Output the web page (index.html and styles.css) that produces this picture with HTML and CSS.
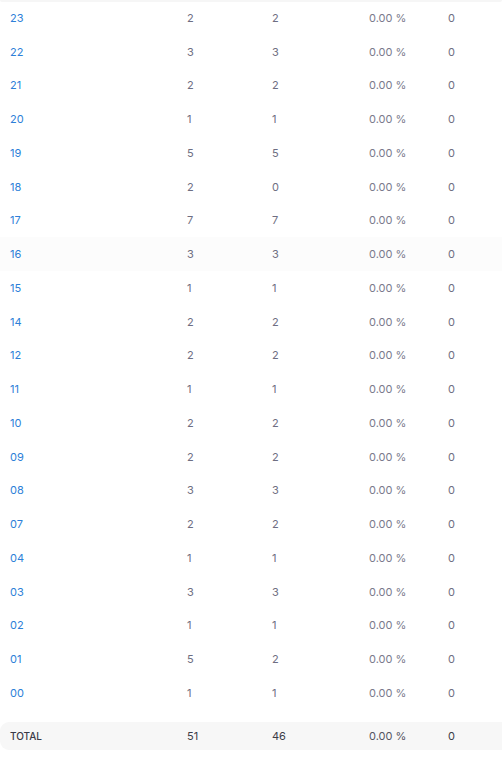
FILE: index.html
```html
<!DOCTYPE html>
<html>
<head>
<meta charset="utf-8">
<link rel="stylesheet" href="styles.css">
</head>
<body>
<div class="top-strip"></div>
<div class="table">
  <div class="row"><a class="c1">23</a><span class="c2">2</span><span class="c3">2</span><span class="c4">0.00 %</span><span class="c5">0</span></div>
  <div class="row"><a class="c1">22</a><span class="c2">3</span><span class="c3">3</span><span class="c4">0.00 %</span><span class="c5">0</span></div>
  <div class="row"><a class="c1">21</a><span class="c2">2</span><span class="c3">2</span><span class="c4">0.00 %</span><span class="c5">0</span></div>
  <div class="row"><a class="c1">20</a><span class="c2">1</span><span class="c3">1</span><span class="c4">0.00 %</span><span class="c5">0</span></div>
  <div class="row"><a class="c1">19</a><span class="c2">5</span><span class="c3">5</span><span class="c4">0.00 %</span><span class="c5">0</span></div>
  <div class="row"><a class="c1">18</a><span class="c2">2</span><span class="c3">0</span><span class="c4">0.00 %</span><span class="c5">0</span></div>
  <div class="row"><a class="c1">17</a><span class="c2">7</span><span class="c3">7</span><span class="c4">0.00 %</span><span class="c5">0</span></div>
  <div class="row hover"><a class="c1">16</a><span class="c2">3</span><span class="c3">3</span><span class="c4">0.00 %</span><span class="c5">0</span></div>
  <div class="row"><a class="c1">15</a><span class="c2">1</span><span class="c3">1</span><span class="c4">0.00 %</span><span class="c5">0</span></div>
  <div class="row"><a class="c1">14</a><span class="c2">2</span><span class="c3">2</span><span class="c4">0.00 %</span><span class="c5">0</span></div>
  <div class="row"><a class="c1">12</a><span class="c2">2</span><span class="c3">2</span><span class="c4">0.00 %</span><span class="c5">0</span></div>
  <div class="row"><a class="c1">11</a><span class="c2">1</span><span class="c3">1</span><span class="c4">0.00 %</span><span class="c5">0</span></div>
  <div class="row"><a class="c1">10</a><span class="c2">2</span><span class="c3">2</span><span class="c4">0.00 %</span><span class="c5">0</span></div>
  <div class="row"><a class="c1">09</a><span class="c2">2</span><span class="c3">2</span><span class="c4">0.00 %</span><span class="c5">0</span></div>
  <div class="row"><a class="c1">08</a><span class="c2">3</span><span class="c3">3</span><span class="c4">0.00 %</span><span class="c5">0</span></div>
  <div class="row"><a class="c1">07</a><span class="c2">2</span><span class="c3">2</span><span class="c4">0.00 %</span><span class="c5">0</span></div>
  <div class="row"><a class="c1">04</a><span class="c2">1</span><span class="c3">1</span><span class="c4">0.00 %</span><span class="c5">0</span></div>
  <div class="row"><a class="c1">03</a><span class="c2">3</span><span class="c3">3</span><span class="c4">0.00 %</span><span class="c5">0</span></div>
  <div class="row"><a class="c1">02</a><span class="c2">1</span><span class="c3">1</span><span class="c4">0.00 %</span><span class="c5">0</span></div>
  <div class="row"><a class="c1">01</a><span class="c2">5</span><span class="c3">2</span><span class="c4">0.00 %</span><span class="c5">0</span></div>
  <div class="row"><a class="c1">00</a><span class="c2">1</span><span class="c3">1</span><span class="c4">0.00 %</span><span class="c5">0</span></div>
  <div class="row total"><span class="c1">TOTAL</span><span class="c2">51</span><span class="c3">46</span><span class="c4">0.00 %</span><span class="c5">0</span></div>
</div>
</body>
</html>
```
FILE: styles.css
```css
html, body {
  margin: 0;
  padding: 0;
  background: #ffffff;
}
body {
  font-family: Inter, "Noto Sans", sans-serif;
  font-size: 11px;
  color: #6e6e82;
  width: 502px;
  overflow: hidden;
}
.top-strip {
  height: 2px;
  background: #f6f6f6;
  border-radius: 0 0 6px 6px;
}
.table {
  display: flex;
  flex-direction: column;
  margin-top: -1px;
}
.row {
  display: grid;
  grid-template-columns: 177px 85px 97px 79px 1fr;
  align-items: center;
  height: 33.75px;
  padding-left: 10px;
}
.row.hover {
  background: #fcfcfc;
}
.c1 {
  color: #2d7fd8;
  text-decoration: none;
}
.c4 {
  color: #7a7a8c;
}
.row.total {
  height: 28px;
  margin-top: 12px;
  background: #f7f7f7;
  border-radius: 9px 0 0 9px;
  color: #3c3c48;
}
.row.total .c1 {
  color: #3a3a48;
  font-size: 10px;
  font-weight: 500;
}
.row.total .c4 {
  color: #555562;
}
```
